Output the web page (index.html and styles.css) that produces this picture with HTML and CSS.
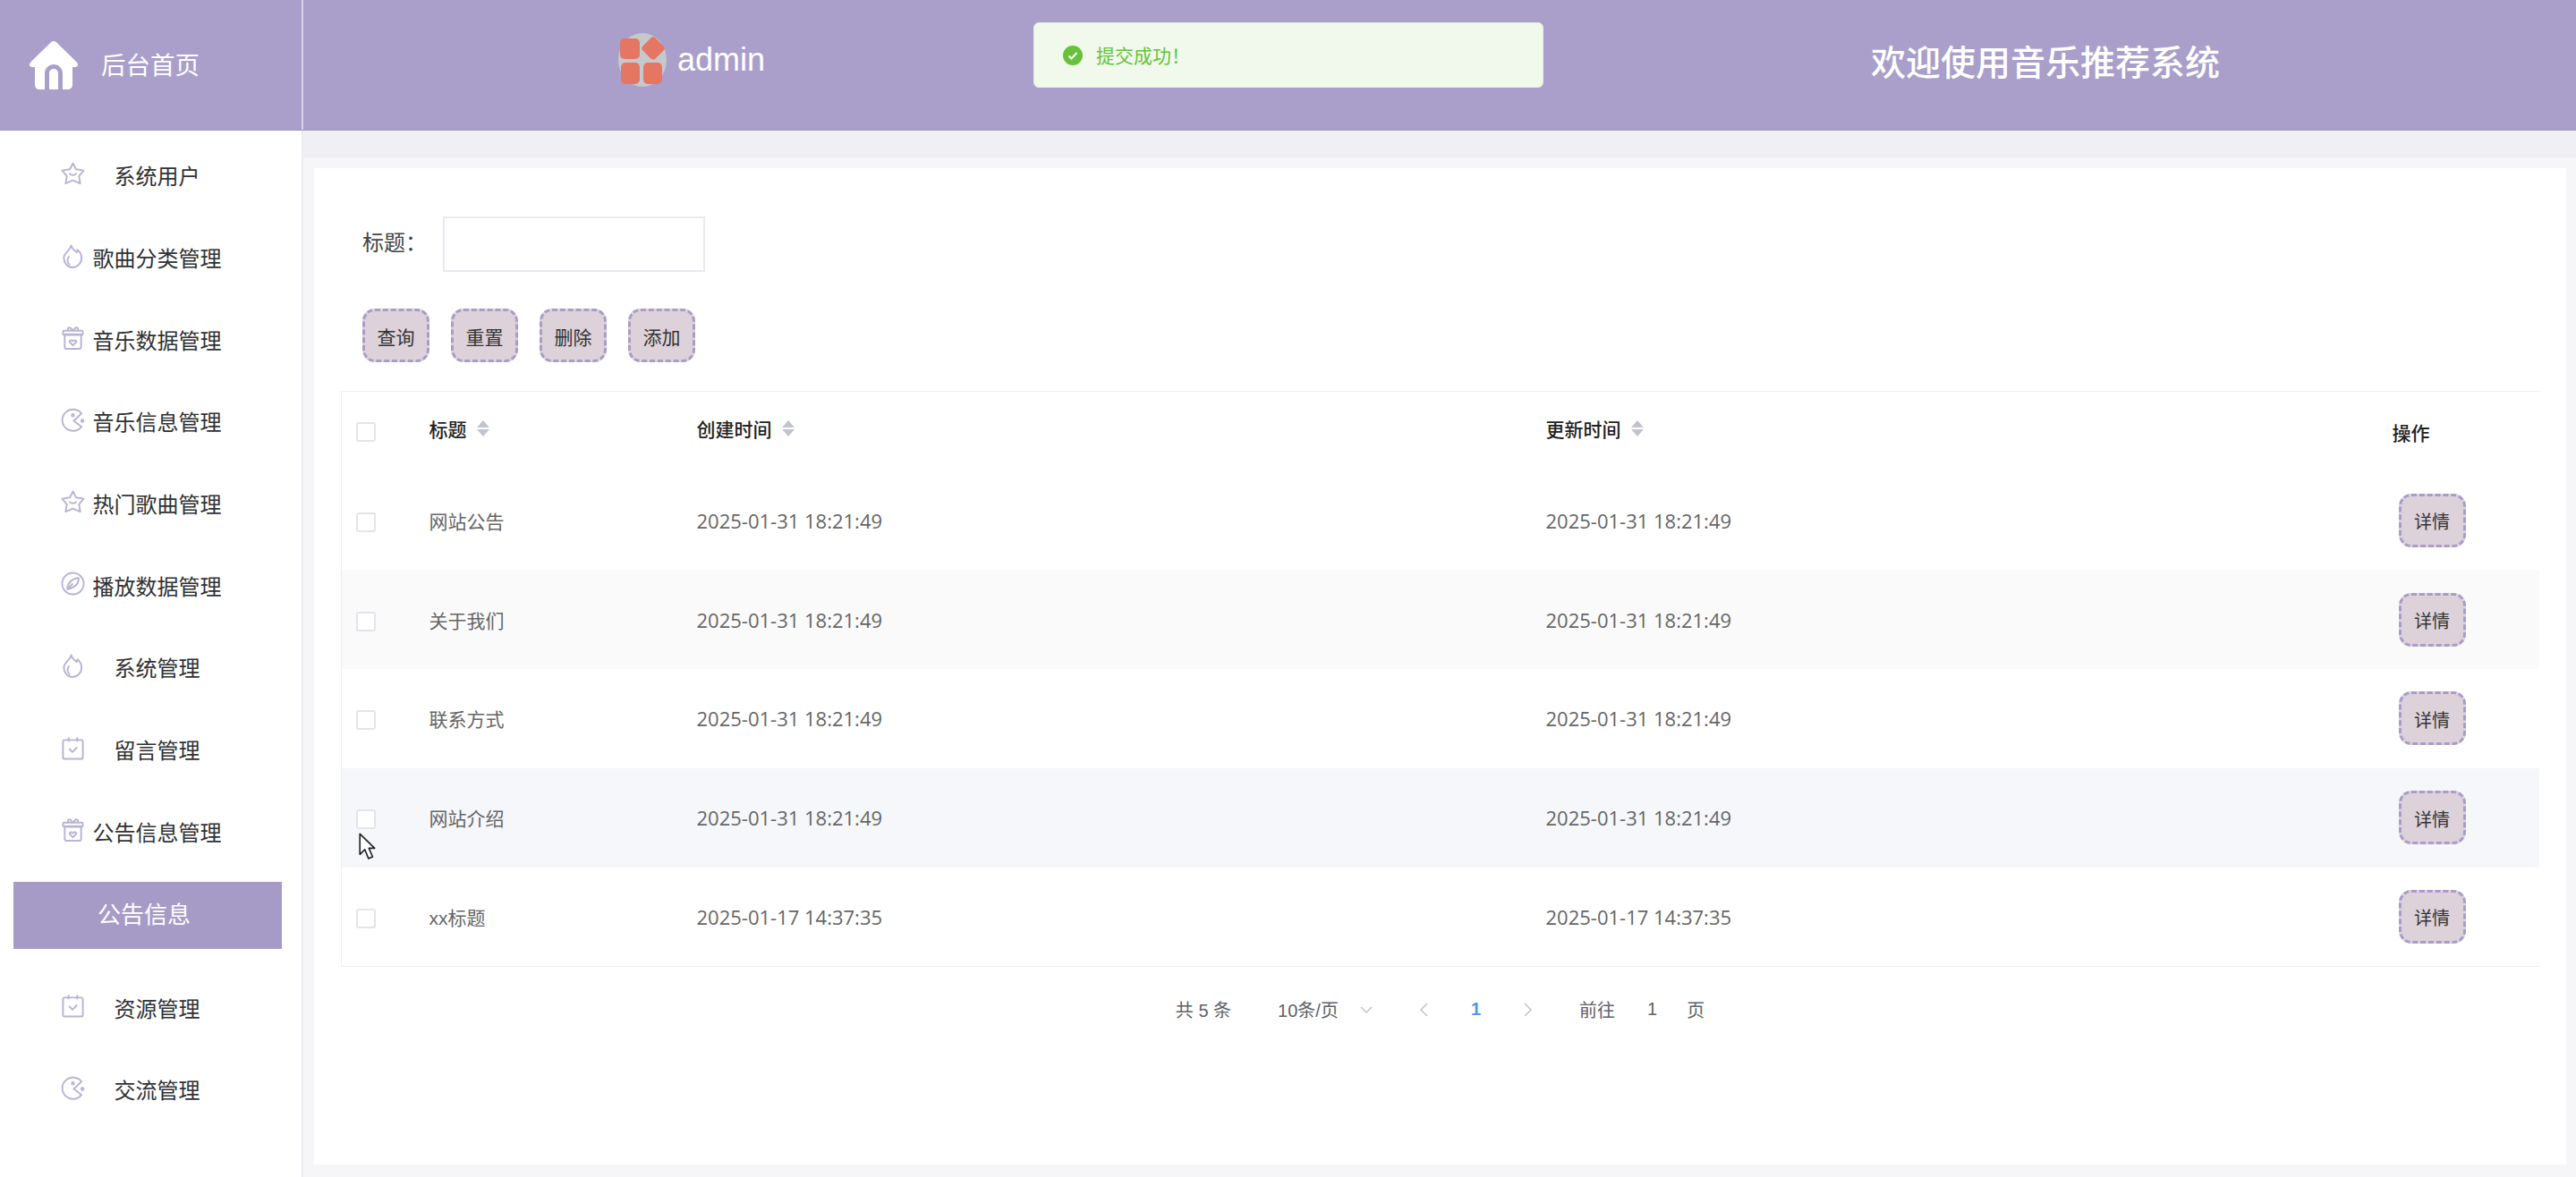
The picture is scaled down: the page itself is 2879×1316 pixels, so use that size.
FILE: index.html
```html
<!DOCTYPE html>
<html lang="zh-CN">
<head>
  <meta charset="UTF-8" />
  <meta name="viewport" content="width=device-width, initial-scale=1.0" />
  <title>音乐推荐系统 - 公告信息</title>
  <link rel="stylesheet" href="styles.css">
</head>
<body>
  <!-- 图标 -->
  <svg class="sprite" xmlns="http://www.w3.org/2000/svg">
    <symbol id="i-star" viewBox="0 0 28 28">
      <path d="M14 1.500L17.500 8.500 26.500 10 21 16.500 22.500 25 14 21.500 5.500 25 7 16.500 1.500 10 10.500 8.500z" />
      <path d="M10 13c1 3 7 3 8 0" />
    </symbol>
    <symbol id="i-flame" viewBox="0 0 28 28">
      <path d="M12 1.500c1 4 4 6 6.500 8 .5-1 .8-1.800.7-3 3 2.500 4.800 6 4.800 9.500 0 6-4.700 11-10.500 11S3.500 22 3.500 16c0-6.500 7.500-8.500 8.500-14.500z" />
      <path d="M10 14c-3 2.500-3.500 7 .5 10" />
    </symbol>
    <symbol id="i-gift" viewBox="0 0 28 28">
      <path d="M4.500 10h19v15a2 2 0 0 1-2 2h-15a2 2 0 0 1-2-2z" />
      <rect x="2.500" y="6" width="23" height="5" rx="1.500" />
      <path d="M9 6C6.500 2.500 10 0 14 6c4-6 7.500-3.500 5 0" />
      <path d="M14 23l-3.500-3.500c-1.500-2 1.500-3.500 3.500-1.500 2-2 5-.5 3.500 1.500z" />
    </symbol>
    <symbol id="i-pac" viewBox="0 0 28 28">
      <path d="M24 6.500A12.500 12.500 0 1 0 24 22L15 15z" />
      <circle class="dot" cx="14" cy="8.500" r="1.300" />
      <circle class="dot" cx="25" cy="15" r="1.300" />
    </symbol>
    <symbol id="i-compass" viewBox="0 0 28 28">
      <circle cx="14" cy="14" r="12.500" />
      <path d="M20.500 7.500c.5 6.500-3.500 11-13 13 0-6.500 4.500-12 13-13z" />
      <path d="M7.500 20.500L14 14" />
    </symbol>
    <symbol id="i-cal" viewBox="0 0 28 28">
      <rect x="2.500" y="4.500" width="23" height="22" rx="2" />
      <path d="M9 1.500v5M19 1.500v5M9.500 14.500l4 4 5.500-5.500" />
    </symbol>
  </svg>

  <header class="topbar">
    <a class="brand">
      <svg class="brand-icon" viewBox="0 0 56 54">
        <path fill="#fff" d="M28 0c1.500 0 2.800.8 3.800 2l22 21.500c2.500 2.600 1 5.500-2 5.500H49v19.500c0 3-1.800 5.500-5 5.500H38V36c0-5.500-4.500-10-10-10s-10 4.500-10 10v18h-6c-3.200 0-5-2.500-5-5.500V29H4.200c-3 0-4.500-2.900-2-5.500L24.200 2c1-1.200 2.300-2 3.800-2z"/>
        <path fill="#fff" d="M23 36c0-3 2.200-5 5-5s5 2 5 5v18H23z"/>
      </svg>
      <span>后台首页</span>
    </a>
    <div class="topbar-main">
      <div class="user">
        <svg class="avatar" viewBox="0 0 54 60">
          <ellipse cx="27" cy="30" rx="27" ry="30" fill="#c5c8cd"/>
          <rect x="2" y="6" width="22" height="23" rx="5" fill="#e57663"/>
          <rect x="29" y="7" width="20" height="20" rx="4" fill="#e57663" transform="rotate(45 39 17)"/>
          <rect x="3" y="33" width="21" height="24" rx="5" fill="#e57663"/>
          <rect x="28" y="33" width="21" height="24" rx="5" fill="#e57663"/>
        </svg>
        <span>admin</span>
      </div>
      <div class="welcome">欢迎使用音乐推荐系统</div>
    </div>
  </header>

  <div class="toast">
    <svg viewBox="0 0 22 22"><circle cx="11" cy="11" r="11" fill="#67c23a"/><path d="M6.500 11.500l3 3 6-6.500" fill="none" stroke="#fff" stroke-width="2"/></svg>
    <span>提交成功！</span>
  </div>

  <div class="layout">
    <nav class="sidebar">
      <a class="nav-item"><svg class="nav-icon"><use href="#i-star"/></svg><span>系统用户</span></a>
      <a class="nav-item"><svg class="nav-icon"><use href="#i-flame"/></svg><span>歌曲分类管理</span></a>
      <a class="nav-item"><svg class="nav-icon"><use href="#i-gift"/></svg><span>音乐数据管理</span></a>
      <a class="nav-item"><svg class="nav-icon"><use href="#i-pac"/></svg><span>音乐信息管理</span></a>
      <a class="nav-item"><svg class="nav-icon"><use href="#i-star"/></svg><span>热门歌曲管理</span></a>
      <a class="nav-item"><svg class="nav-icon"><use href="#i-compass"/></svg><span>播放数据管理</span></a>
      <a class="nav-item"><svg class="nav-icon"><use href="#i-flame"/></svg><span>系统管理</span></a>
      <a class="nav-item"><svg class="nav-icon"><use href="#i-cal"/></svg><span>留言管理</span></a>
      <a class="nav-item"><svg class="nav-icon"><use href="#i-gift"/></svg><span>公告信息管理</span></a>
      <a class="nav-sub">公告信息</a>
      <a class="nav-item"><svg class="nav-icon"><use href="#i-cal"/></svg><span>资源管理</span></a>
      <a class="nav-item"><svg class="nav-icon"><use href="#i-pac"/></svg><span>交流管理</span></a>
    </nav>

    <main class="content">
      <div class="band"></div>
      <section class="card">
        <div class="search">
          <label>标题：</label>
          <input type="text">
        </div>
        <div class="actions">
          <button class="btn">查询</button>
          <button class="btn">重置</button>
          <button class="btn">删除</button>
          <button class="btn">添加</button>
        </div>

        <table class="grid">
          <colgroup>
            <col class="c-check"><col class="c-title"><col class="c-date"><col class="c-date2"><col>
          </colgroup>
          <thead>
            <tr>
              <th><span class="check"></span></th>
              <th><span class="sort">标题<i class="carets"></i></span></th>
              <th><span class="sort">创建时间<i class="carets"></i></span></th>
              <th><span class="sort">更新时间<i class="carets"></i></span></th>
              <th class="op-head">操作</th>
            </tr>
          </thead>
          <tbody>
            <tr>
              <td><span class="check"></span></td><td>网站公告</td>
              <td class="date">2025-01-31 18:21:49</td><td class="date">2025-01-31 18:21:49</td>
              <td><button class="btn btn-row">详情</button></td>
            </tr>
            <tr class="alt">
              <td><span class="check"></span></td><td>关于我们</td>
              <td class="date">2025-01-31 18:21:49</td><td class="date">2025-01-31 18:21:49</td>
              <td><button class="btn btn-row">详情</button></td>
            </tr>
            <tr>
              <td><span class="check"></span></td><td>联系方式</td>
              <td class="date">2025-01-31 18:21:49</td><td class="date">2025-01-31 18:21:49</td>
              <td><button class="btn btn-row">详情</button></td>
            </tr>
            <tr class="hover">
              <td><span class="check"></span></td><td>网站介绍</td>
              <td class="date">2025-01-31 18:21:49</td><td class="date">2025-01-31 18:21:49</td>
              <td><button class="btn btn-row">详情</button></td>
            </tr>
            <tr>
              <td><span class="check"></span></td><td>xx标题</td>
              <td class="date">2025-01-17 14:37:35</td><td class="date">2025-01-17 14:37:35</td>
              <td><button class="btn btn-row">详情</button></td>
            </tr>
          </tbody>
        </table>

        <div class="pager">
          <span class="total">共 5 条</span>
          <span class="size">10条/页</span>
          <svg class="chev chev-down" viewBox="0 0 14 8"><path d="M1 1l6 6 6-6"/></svg>
          <svg class="chev chev-prev" viewBox="0 0 10 16"><path d="M9 1L2 8l7 7"/></svg>
          <span class="page-num">1</span>
          <svg class="chev chev-next" viewBox="0 0 10 16"><path d="M1 1l7 7-7 7"/></svg>
          <span class="goto">前往</span>
          <span class="goto-num">1</span>
          <span>页</span>
        </div>
      </section>
    </main>
  </div>

  <svg class="cursor" viewBox="0 0 20 36">
    <path d="M1.500 1.500v25l6-6 4.500 11 5-2-4.500-10.500h7z" fill="#fff" stroke="#222" stroke-width="1.800" stroke-linejoin="round"/>
  </svg>
</body>
</html>
```

FILE: styles.css
```css
* {
  box-sizing: border-box;
}
html, body {
  height: 100%;
}
body {
  margin: 0;
  overflow: hidden;
  background: #f6f6f9;
  color: #303133;
  font-family: "Liberation Sans", "Noto Sans CJK SC", sans-serif;
}
.sprite {
  position: absolute;
  width: 0;
  height: 0;
}

/* 顶部 */
.topbar {
  display: flex;
  height: 146px;
  background: #a99fca;
  border-bottom: 1px solid #9f95c2;
  color: #fff;
}
.brand {
  display: flex;
  align-items: center;
  width: 339px;
  padding-left: 32px;
  border-right: 2px solid #d8d3e6;
  font-size: 27.500px;
}
.brand span {
  margin-bottom: 3px;
}
.brand-icon {
  width: 56px;
  height: 54px;
  margin-right: 25px;
}
.topbar-main {
  display: flex;
  flex: 1;
  justify-content: space-between;
  padding: 0 398px 0 352px;
}
.user {
  display: flex;
  align-items: center;
  height: 133px;
  font-size: 36px;
}
.avatar {
  width: 54px;
  height: 60px;
  margin-right: 12px;
}
.welcome {
  font-size: 39px;
  font-weight: 500;
  line-height: 141px;
}
.toast {
  position: absolute;
  top: 25px;
  left: 1155px;
  display: flex;
  align-items: center;
  width: 570px;
  height: 73px;
  padding-left: 32px;
  background: #f0f9eb;
  border: 1px solid #e1f3d8;
  border-radius: 6px;
  color: #67c23a;
  font-size: 21px;
}
.toast span {
  margin-bottom: 2px;
}
.toast svg {
  width: 22px;
  height: 22px;
  margin-right: 15px;
}

.layout {
  display: flex;
  height: calc(100% - 146px);
}

/* 左侧菜单 */
.sidebar {
  width: 339px;
  padding-top: 4px;
  background: #fff;
  border-right: 2px solid #ecebf2;
  font-size: 24px;
}
.nav-item {
  display: flex;
  align-items: center;
  height: 91.700px;
  padding-left: 68px;
}
.nav-item span {
  width: 145px;
  margin-left: 8px;
  text-align: center;
  white-space: nowrap;
}
.nav-icon {
  width: 27px;
  height: 27px;
  margin-top: -3px;
  fill: none;
  stroke: #b8b4d3;
  stroke-width: 2;
  stroke-linejoin: round;
}
.nav-icon .dot {
  fill: #b8b4d3;
  stroke: none;
}
.nav-sub {
  display: block;
  width: 300px;
  height: 75px;
  margin: 11px 0 19px 15px;
  padding-right: 8px;
  background: #a69bc6;
  color: #fff;
  font-size: 26px;
  line-height: 75px;
  text-align: center;
}

/* 内容 */
.content {
  flex: 1;
  min-width: 0;
}
.band {
  height: 30px;
  background: #f0eff4;
}
.card {
  height: 1114px;
  margin: 12px 11px 0 12px;
  padding: 54px 30px 0;
  background: #fff;
}
.search {
  display: flex;
  align-items: center;
  padding-left: 24px;
}
.search label {
  width: 90px;
  margin-bottom: 7px;
  color: #444;
  font-size: 24px;
}
.search input {
  width: 293px;
  height: 62px;
  background: #fff;
  border: 2px solid #e9e9f1;
}
.actions {
  display: flex;
  gap: 24px;
  margin: 41px 0 32px;
  padding-left: 24px;
}
.btn {
  width: 75px;
  height: 60px;
  padding: 2px 0 0;
  background: #ddd1da;
  border: 3px dashed #a79dc8;
  border-radius: 14px;
  color: #333;
  font-family: inherit;
  font-size: 21px;
}

/* 表格 */
.grid {
  width: 2457px;
  table-layout: fixed;
  border-collapse: collapse;
  border-left: 1px solid #ebeef5;
  border-top: 1px solid #ebeef5;
  border-bottom: 1px solid #ebeef5;
  font-size: 21px;
  color: #666;
}
.c-check { width: 82px; }
.c-title { width: 299px; }
.c-date { width: 949px; }
.c-date2 { width: 946px; }
.grid th {
  height: 89px;
  padding: 2px 16px 0;
  color: #222;
  font-weight: 500;
  text-align: left;
}
.grid td {
  height: 110.800px;
  padding: 0 16px;
}
.grid td .check {
  transform: translateY(2px);
}
.sort {
  display: inline-flex;
  align-items: center;
  transform: translateY(-4px);
}
.carets {
  position: relative;
  width: 14px;
  height: 18px;
  margin-left: 11px;
}
.carets::before, .carets::after {
  content: "";
  position: absolute;
  left: 0;
  border: 7px solid transparent;
}
.carets::before {
  top: -7px;
  border-bottom: 8px solid #c0c4cc;
}
.carets::after {
  bottom: -7px;
  border-top: 8px solid #c0c4cc;
}
.check {
  display: block;
  width: 22px;
  height: 22px;
  background: #fff;
  border: 2px solid #e4e4ec;
  border-radius: 3px;
}
.date {
  font-family: "Open Sans", sans-serif;
  font-size: 22px;
}
.alt td {
  background: #fafafa;
}
.hover td {
  background: #f5f7fa;
}
.btn-row {
  margin-left: 7px;
  font-size: 20px;
}

/* 分页 */
.pager {
  display: flex;
  align-items: center;
  justify-content: center;
  height: 48px;
  margin-top: 24px;
  color: #606266;
  font-size: 20px;
}
.size {
  margin-left: 52px;
}
.chev {
  fill: none;
  stroke: #c0c4cc;
  stroke-width: 1.500;
}
.chev-down {
  width: 14px;
  height: 8px;
  margin-left: 24px;
}
.chev-prev {
  width: 10px;
  height: 16px;
  margin-left: 52px;
}
.page-num {
  margin: 0 48px;
  color: #4a9be8;
  font-weight: 700;
}
.chev-next {
  width: 10px;
  height: 16px;
}
.goto {
  margin-left: 52px;
}
.goto-num {
  margin: 0 33px 0 36px;
}

.cursor {
  position: absolute;
  top: 931px;
  left: 400px;
  width: 20px;
  height: 33px;
}
```
